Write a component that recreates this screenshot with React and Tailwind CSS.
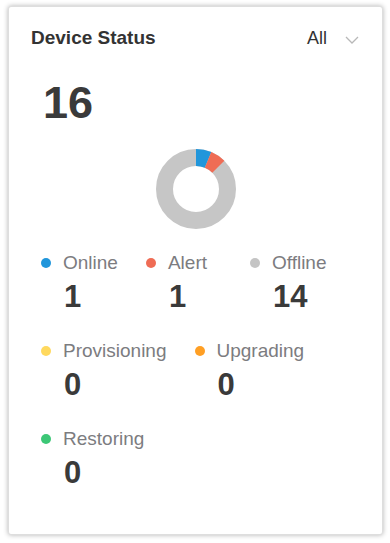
import React from "react";

const items = [
  { label: "Online", value: 1, color: "bg-[#2196db]" },
  { label: "Alert", value: 1, color: "bg-[#ef6c55]" },
  { label: "Offline", value: 14, color: "bg-[#c4c4c4]" },
  { label: "Provisioning", value: 0, color: "bg-[#ffd95e]" },
  { label: "Upgrading", value: 0, color: "bg-[#ff9f24]" },
  { label: "Restoring", value: 0, color: "bg-[#3cc776]" },
];

// donut chart, segments start at 12 o'clock
function Donut() {
  const r = 31.5;
  const c = 2 * Math.PI * r;
  const seg = c / 16;
  return (
    <svg width="80" height="80" viewBox="0 0 80 80">
      <g transform="rotate(-90 40 40)">
        <circle cx="40" cy="40" r={r} fill="none" stroke="#c6c6c6" strokeWidth="17" />
        <circle
          cx="40"
          cy="40"
          r={r}
          fill="none"
          stroke="#2196db"
          strokeWidth="17"
          strokeDasharray={`${seg} ${c - seg}`}
        />
        <circle
          cx="40"
          cy="40"
          r={r}
          fill="none"
          stroke="#ef6c55"
          strokeWidth="17"
          strokeDasharray={`${seg} ${c - seg}`}
          strokeDashoffset={-seg}
        />
      </g>
    </svg>
  );
}

export default function App() {
  return (
    <div
      className="bg-white pt-[6px] pl-[8px] pr-[7px] pb-[8px]"
      style={{ fontFamily: '"Liberation Sans", Arial, sans-serif' }}
    >
      <div className="h-[529px] bg-white rounded-[3px] border border-[#dedede] shadow-[0_0_5px_rgba(0,0,0,0.3)] pt-[20px] pl-[22px] pr-[23px] flex flex-col">
        {/* Header */}
        <div className="flex justify-between items-center">
          <h2 className="text-[19px] leading-[22px] font-bold text-[#333]">Device Status</h2>
          <div className="flex items-center gap-[18px]">
            <span className="text-[18px] leading-[22px] text-[#333]">All</span>
            <svg width="14" height="8" viewBox="0 0 14 8" className="mt-[4px]">
              <path d="M1 1 L7 7 L13 1" fill="none" stroke="#b8b8b8" strokeWidth="1.3" />
            </svg>
          </div>
        </div>

        {/* Total */}
        <div className="mt-[32px] pl-[12px] text-[45px] leading-[44px] font-bold text-[#3a3a3a]">16</div>

        <div className="flex justify-center mt-[24px] pl-[2px]">
          <Donut />
        </div>

        {/* Legend */}
        <div className="mt-[23px] pl-[10px] pr-[10px] flex flex-wrap gap-x-[28px] gap-y-[26px]">
          {items.map((it) => (
            <div key={it.label} className="min-w-[76px] flex flex-col">
              <div className="flex items-center gap-[12px] h-[22px]">
                <span className={`w-[10px] h-[10px] rounded-full ${it.color}`}></span>
                <span className="text-[19px] leading-[22px] text-[#7c7c80]">{it.label}</span>
              </div>
              <div className="mt-[6px] pl-[23px] text-[31px] leading-[34px] font-bold text-[#3a3a3a]">
                {it.value}
              </div>
            </div>
          ))}
        </div>
      </div>
    </div>
  );
}
